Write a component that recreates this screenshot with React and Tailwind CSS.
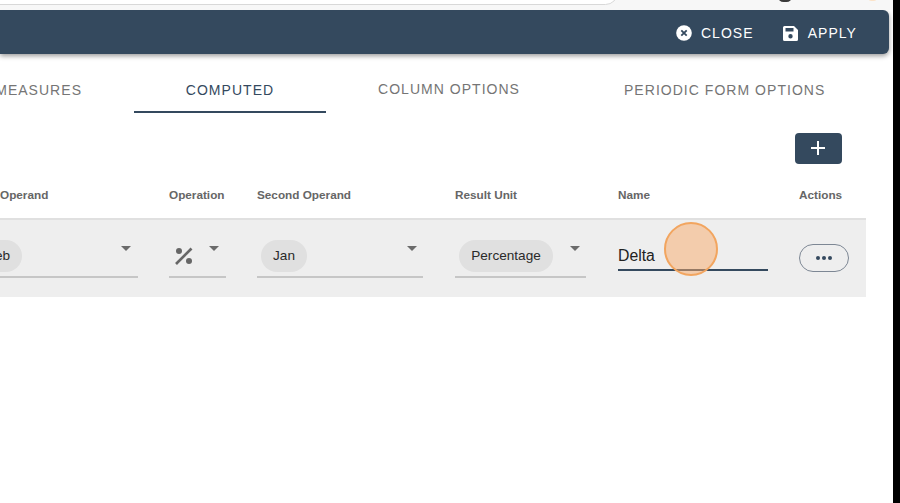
import React from "react";

function Caret({ className = "" }) {
  return (
    <svg width="10" height="5" viewBox="0 0 10 5" className={className}>
      <path d="M0 0h10L5 5z" fill="#6b6b6b" />
    </svg>
  );
}

function Chip({ children, className = "" }) {
  return (
    <span className={`flex h-[32px] items-center rounded-full bg-[#e0e0e0] text-[13.6px] text-[#2a2a2a] ${className}`}>
      {children}
    </span>
  );
}

function Th({ className, children }) {
  return <div className={`text-[11.75px] font-bold leading-[16px] text-[#666666] ${className}`}>{children}</div>;
}

function SelectCell({ className, caretClass, children }) {
  return (
    <div className={`relative h-[59px] shrink-0 border-b-2 border-[#c6c6c6] ${className}`}>
      {children}
      <Caret className={`absolute top-[9px] ${caretClass}`} />
    </div>
  );
}

export default function App() {
  return (
    <div className="flex h-[503px] w-[900px] overflow-hidden bg-white font-['Liberation_Sans',Arial,sans-serif]">
      <div className="relative flex h-full w-[893px] shrink-0 flex-col overflow-hidden bg-white">
        <div className="relative h-[10px] shrink-0 bg-[#f7f7f7]">
          <div className="absolute -top-[20px] -left-[20px] h-[25px] w-[638px] rounded-[14px] border border-[#d8d8d8] bg-white" />
          <div className="absolute -top-[9px] left-[778px] h-[11px] w-[14px] rounded-full bg-[#3a3a3a]" />
          <div className="absolute -top-[8px] left-[867px] h-[9px] w-[11px] rounded-full bg-[#fbe3c8]" />
        </div>

        <header className="mr-[4px] flex h-[44px] shrink-0 items-center justify-end rounded-br-[6px] rounded-tr-[6px] bg-[#34495e] pr-[32px] pt-[2px] text-[14px] tracking-[1.05px] text-white shadow-[0_2px_5px_rgba(0,0,0,0.4)]">
          <button className="flex items-center gap-[9px]">
            <svg width="16" height="16" viewBox="0 0 16 16">
              <circle cx="8" cy="8" r="7.800" fill="#fff" />
              <path d="M5.300 5.300l5.400 5.400M10.700 5.300l-5.400 5.400" stroke="#34495e" strokeWidth="1.800" />
            </svg>
            CLOSE
          </button>
          <button className="ml-[29px] flex items-center gap-[10px]">
            <svg width="15" height="15" viewBox="0 0 15 15">
              <path fillRule="evenodd" d="M1.500 0H11l4 4v9.500a1.500 1.500 0 0 1-1.500 1.500h-12A1.500 1.500 0 0 1 0 13.500v-12A1.500 1.500 0 0 1 1.500 0zM2.500 2v3.500h8V2zM7.500 8a2.200 2.200 0 1 0 0 4.400a2.200 2.200 0 0 0 0-4.400z" fill="#fff" />
            </svg>
            APPLY
          </button>
        </header>

        <nav className="mt-[19px] flex h-[40px] shrink-0 items-start text-[14px] leading-[16px] tracking-[1.03px] text-[#757575]">
          <div className="flex w-[82px] shrink-0 justify-end overflow-hidden whitespace-nowrap pt-[9px]">MEASURES</div>
          <div className="ml-[52px] h-[40px] w-[192px] shrink-0 border-b-2 border-[#34495e] pt-[9px] text-center text-[#34495e]">COMPUTED</div>
          <div className="ml-[52px] whitespace-nowrap pt-[8px]">COLUMN OPTIONS</div>
          <div className="ml-[104px] whitespace-nowrap pt-[9px]">PERIODIC FORM OPTIONS</div>
        </nav>

        <div className="mt-[20px] flex h-[31px] shrink-0 justify-end pr-[51px]">
          <button className="flex h-[31px] w-[47px] items-center justify-center rounded-[4px] bg-[#34495e]">
            <svg width="14" height="14" viewBox="0 0 14 14" className="-ml-[1px] -mt-[1px]">
              <path d="M7 0v14M0 7h14" stroke="#fff" strokeWidth="2" />
            </svg>
          </button>
        </div>

        <div className="mt-[22px] mr-[27px] flex h-[17px] shrink-0 items-center">
          <Th className="w-[169px] shrink-0 text-left">Operand</Th>
          <Th className="w-[88px] shrink-0">Operation</Th>
          <Th className="w-[198px] shrink-0">Second Operand</Th>
          <Th className="w-[163px] shrink-0">Result Unit</Th>
          <Th className="w-[181px] shrink-0">Name</Th>
          <Th className="shrink-0">Actions</Th>
        </div>

        <div className="mt-[15px] mr-[27px] flex h-[79px] shrink-0 items-start border-t-2 border-[#e0e0e0] bg-[#eeeeee]">
          <SelectCell className="-mt-[1px] w-[138px] pt-[21px]" caretClass="left-[121px] mt-[18px]">
            <Chip className="-ml-[20px] w-[42px] justify-end pr-[12px]">eb</Chip>
          </SelectCell>
          <SelectCell className="-mt-[1px] ml-[31px] w-[57px] pt-[21px]" caretClass="left-[40px] mt-[18px]">
            <svg width="20" height="20" viewBox="0 0 20 20" className="ml-[5px] mt-[6px]">
              <circle cx="5" cy="5" r="3" fill="#666" />
              <circle cx="15" cy="15" r="3" fill="#666" />
              <path d="M2 18L17.500 2.500" stroke="#666" strokeWidth="2.600" />
            </svg>
          </SelectCell>
          <SelectCell className="-mt-[1px] ml-[31px] w-[166px] pt-[21px]" caretClass="left-[150px] mt-[18px]">
            <Chip className="ml-[4px] w-[46px] justify-center">Jan</Chip>
          </SelectCell>
          <SelectCell className="-mt-[1px] ml-[32px] w-[131px] pt-[21px]" caretClass="left-[115px] mt-[18px]">
            <Chip className="ml-[4px] w-[94px] justify-center">Percentage</Chip>
          </SelectCell>
          <div className="ml-[32px] mt-[18px] h-[33px] w-[150px] shrink-0 border-b-2 border-[#34495e] pt-[8px] text-[15.800px] leading-[20px] text-[#222222]">
            Delta
          </div>
          <button className="ml-[31px] mt-[24px] flex h-[28px] w-[50px] shrink-0 items-center justify-center gap-[2px] rounded-full border border-[#7d8794]">
            <span className="h-[4px] w-[4px] rounded-full bg-[#34495e]" />
            <span className="h-[4px] w-[4px] rounded-full bg-[#34495e]" />
            <span className="h-[4px] w-[4px] rounded-full bg-[#34495e]" />
          </button>
        </div>

        <div className="absolute left-[664px] top-[222px] h-[54px] w-[54px] rounded-full border-2 border-[#f2a55f] bg-[rgba(248,170,105,0.5)]" />
      </div>
      <div className="h-full w-[7px] shrink-0 bg-black" />
    </div>
  );
}
